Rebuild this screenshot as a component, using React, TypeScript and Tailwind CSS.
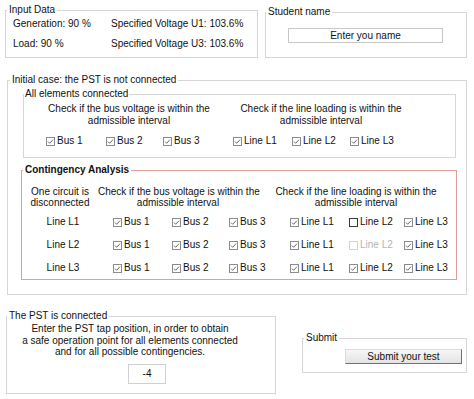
import React from "react";

type CheckProps = {
  label: string;
  checked?: boolean;
  disabled?: boolean;
  w?: string;
};

const Check = ({ label, checked = true, disabled = false, w = "" }: CheckProps) => {
  const stroke = disabled ? "#d4d4d4" : checked ? "#8c8c8c" : "#3a3a3a";
  return (
    <span className={`flex items-center gap-[2px] ${w}`}>
      <svg width="9" height="9" viewBox="0 0 9 9" className="shrink-0">
        <rect x="0.5" y="0.5" width="8" height="8" fill="white" stroke={stroke} />
        {checked && (
          <polyline
            points="2,4.6 3.7,6.3 7,2.6"
            fill="none"
            stroke="#5a5a5a"
            strokeWidth="0.9"
          />
        )}
      </svg>
      <span className={disabled ? "text-[#b4b4b4]" : ""}>{label}</span>
    </span>
  );
};

const Legend = ({ children, className = "" }: { children: React.ReactNode; className?: string }) => (
  <legend className={`px-[2px] leading-[12px] ${className}`}>{children}</legend>
);

// widths of the contingency checkbox columns
const cw = ["w-[59px]", "w-[57px]", "w-[61px]", "w-[59px]", "w-[55px]", ""];

const rows = [
  { name: "Line L1", checks: [true, true, true, true, false, true], disabled: -1 },
  { name: "Line L2", checks: [true, true, true, true, false, true], disabled: 4 },
  { name: "Line L3", checks: [true, true, true, true, true, true], disabled: -1 },
];

const labels = ["Bus 1", "Bus 2", "Bus 3", "Line L1", "Line L2", "Line L3"];

export default function App() {
  return (
    <div className="h-[399px] w-[474px] overflow-hidden bg-white font-['Liberation_Sans',Arial,sans-serif] text-[10px] leading-[12px] text-[#111]">
      {/* top row */}
      <div className="flex items-start pt-[4px]">
        <fieldset className="ml-[5px] w-[253px] border border-[#d6d6d6] pb-[7px]">
          <Legend className="ml-[1px]">Input Data</Legend>
          <div className="mt-[2px] grid grid-cols-[98px_1fr] gap-y-[8px] pl-[7px]">
            <span>Generation: 90 %</span>
            <span>Specified Voltage U1: 103.6%</span>
            <span>Load: 90 %</span>
            <span>Specified Voltage U3: 103.6%</span>
          </div>
        </fieldset>
        <fieldset className="ml-[7px] mt-[2px] w-[202px] border border-[#d6d6d6] pb-[14px]">
          <Legend>Student name</Legend>
          <div className="ml-[22px] mt-[10px] flex h-[15px] w-[155px] items-center justify-center border border-[#c8c8c8] bg-white">
            Enter you name
          </div>
        </fieldset>
      </div>

      {/* initial case */}
      <fieldset className="ml-[7px] mt-[16px] w-[460px] border border-[#d6d6d6] pb-[14px]">
        <Legend className="ml-[2px]">Initial case: the PST is not connected</Legend>

        <fieldset className="ml-[15px] mt-[2px] w-[433px] border border-[#d6d6d6] pb-[10px]">
          <Legend className="!px-[1px]">All elements connected</Legend>
          <div className="mt-[3px] grid grid-cols-[210px_174px] text-center">
            <span>
              Check if the bus voltage is within the
              <br />
              admissible interval
            </span>
            <span>
              Check if the line loading is within the
              <br />
              admissible interval
            </span>
          </div>
          <div className="mt-[8px] flex pl-[22px]">
            <Check label="Bus 1" w="w-[60px]" />
            <Check label="Bus 2" w="w-[57px]" />
            <Check label="Bus 3" w="w-[70px]" />
            <Check label="Line L1" w="w-[59px]" />
            <Check label="Line L2" w="w-[58px]" />
            <Check label="Line L3" />
          </div>
        </fieldset>

        <fieldset className="ml-[13px] mt-[6px] w-[436px] border border-[#e39c9c] pb-[5px]">
          <Legend className="ml-[1px] font-bold">Contingency Analysis</Legend>
          <div className="mt-[10px] grid grid-cols-[76px_160px_196px] text-center leading-[11px]">
            <span>
              One circuit is
              <br />
              disconnected
            </span>
            <span className="whitespace-nowrap">
              Check if the bus voltage is within the
              <br />
              admissible interval
            </span>
            <span>
              Check if the line loading is within the
              <br />
              admissible interval
            </span>
          </div>
          <div className="mt-[8px] flex flex-col gap-[11px]">
            {rows.map((r) => (
              <div key={r.name} className="flex">
                <span className="w-[82px] text-center">{r.name}</span>
                <div className="ml-[9px] flex">
                  {labels.map((l, i) => (
                    <Check
                      key={l}
                      label={l}
                      w={cw[i]}
                      checked={r.checks[i]}
                      disabled={r.disabled === i}
                    />
                  ))}
                </div>
              </div>
            ))}
          </div>
        </fieldset>
      </fieldset>

      {/* bottom row */}
      <div className="mt-[15px] flex items-start">
        <fieldset className="ml-[6px] w-[270px] border border-[#d6d6d6] pb-[9px]">
          <Legend>The PST is connected</Legend>
          <div className="mt-[1px] w-[246px] text-center leading-[11.5px]">
            Enter the PST tap position, in order to obtain
            <br />
            a safe operation point for all elements connected
            <br />
            and for all possible contingencies.
          </div>
          <div className="ml-[121px] mt-[6px] flex h-[20px] w-[38px] items-center justify-center border border-[#d0d0d0] bg-white">
            -4
          </div>
        </fieldset>
        <fieldset className="ml-[26px] mt-[22px] w-[165px] border border-[#d6d6d6] pb-[8px]">
          <Legend className="ml-[1px]">Submit</Legend>
          <button className="ml-[42px] mt-[5px] flex h-[15px] w-[117px] items-center justify-center border border-[#dcdcdc] border-b-[#707070] border-r-[#707070] bg-gradient-to-b from-[#f6f6f6] to-[#e4e4e4] leading-[12px]">
            Submit your test
          </button>
        </fieldset>
      </div>
    </div>
  );
}
